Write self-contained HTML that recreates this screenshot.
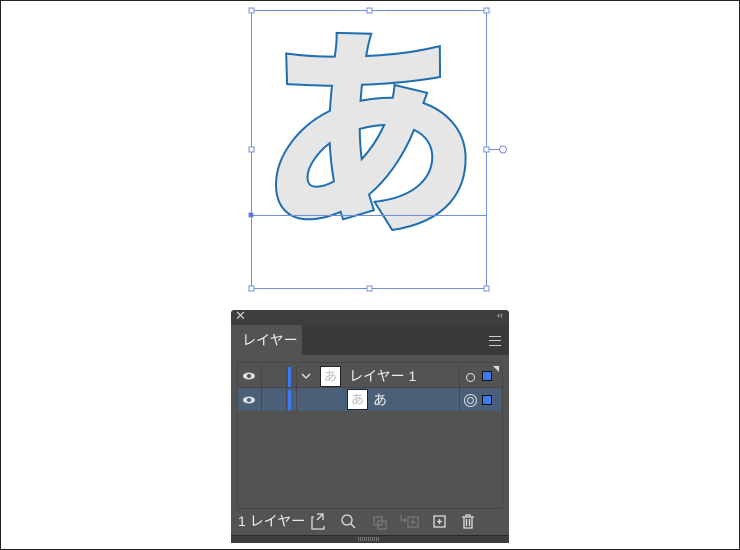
<!DOCTYPE html>
<html><head><meta charset="utf-8"><style>
body{margin:0;width:740px;height:550px;overflow:hidden;background:#fff;font-family:"Liberation Sans","Noto Sans CJK JP",sans-serif;position:relative}
.frame{position:absolute;left:0;top:0;width:738px;height:548px;border:1px solid #222}
.abs{position:absolute}
</style></head><body>
<div class="frame"></div>
<svg class="abs" style="left:0;top:0" width="740" height="300">
<text x="369" y="214" font-family="Noto Sans CJK JP" font-weight="900" font-size="222" text-anchor="middle" fill="#e6e6e6" stroke="#1f6eb0" stroke-width="2">あ</text>
<g stroke="#6f8fdc" stroke-width="1" fill="none">
<rect x="251.5" y="10.5" width="235" height="278"/>
<line x1="251" y1="215.5" x2="487" y2="215.5"/>
<line x1="487" y1="149.5" x2="500" y2="149.5"/>
<circle cx="503" cy="149.5" r="3.5" fill="#fff"/>
<g fill="#fff">
<rect x="249" y="8" width="5" height="5"/><rect x="367" y="8" width="5" height="5"/><rect x="484" y="8" width="5" height="5"/>
<rect x="249" y="147" width="5" height="5"/><rect x="484" y="147" width="5" height="5"/>
<rect x="249" y="286" width="5" height="5"/><rect x="367" y="286" width="5" height="5"/><rect x="484" y="286" width="5" height="5"/>
</g>
<rect x="249" y="213" width="4" height="4" fill="#4a6fd8"/>
</g>
</svg>
<div class="abs" style="left:231px;top:310px;width:278px;height:233px;background:#535353;border-radius:3px 3px 0 0;overflow:hidden">
 <div class="abs" style="left:0;top:0;width:278px;height:15px;background:#3e3e3e;color:#ccc;font-size:13px">
  <span class="abs" style="left:4px;top:-2px">✕</span><span class="abs" style="right:6px;top:0;font-size:9px">‹‹</span></div>
 <div class="abs" style="left:0;top:15px;width:278px;height:30px;background:#3a3a3a"></div>
 <div class="abs" style="left:0;top:15px;width:71px;height:30px;background:#535353;color:#eee;font-size:14px;line-height:30px;text-indent:11px">レイヤー</div>
 <div class="abs" style="right:8px;top:26px;width:12px;height:8px;border-top:1px solid #ccc;border-bottom:1px solid #ccc"><div style="margin-top:3px;border-top:1px solid #ccc"></div></div>
 <div class="abs" style="left:6px;top:52px;width:264px;height:145px;border:1px solid #474747;background:#535353"></div>
 <div class="abs" style="left:7px;top:55px;width:263px;height:22px;background:#535353;border-bottom:1px solid #474747"></div>
 <div class="abs" style="left:7px;top:78px;width:263px;height:23px;background:#4b5f78"></div>
 <div class="abs" style="left:30px;top:55px;width:1px;height:46px;background:#474747"></div>
 <div class="abs" style="left:55px;top:55px;width:1px;height:46px;background:#474747"></div>
 <div class="abs" style="left:65px;top:55px;width:1px;height:46px;background:#474747"></div>
 <div class="abs" style="left:228px;top:55px;width:1px;height:46px;background:#474747"></div>
 <div class="abs" style="left:57px;top:57px;width:3px;height:20px;background:#3c78f0"></div>
 <div class="abs" style="left:57px;top:80px;width:3px;height:20px;background:#3c78f0"></div>
 <svg class="abs" style="left:10px;top:60px" width="16" height="40"><g fill="#ddd"><ellipse cx="8" cy="6" rx="6" ry="3.5"/><ellipse cx="8" cy="30" rx="6" ry="3.5"/></g><g fill="#535353"><circle cx="8" cy="6" r="2"/></g><circle cx="8" cy="30" r="2" fill="#4b5f78"/></svg>
 <svg class="abs" style="left:70px;top:62px" width="10" height="8"><path d="M1 2l4 4 4-4" stroke="#ddd" stroke-width="1.5" fill="none"/></svg>
 <div class="abs" style="left:89px;top:56px;width:19px;height:19px;background:#fff;border:1px solid #222;color:#bbb;font-size:13px;line-height:19px;text-align:center">あ</div>
 <div class="abs" style="left:118px;top:56px;color:#eee;font-size:14px">レイヤー 1</div>
 <div class="abs" style="left:116px;top:79px;width:19px;height:19px;background:#fff;border:1px solid #222;color:#bbb;font-size:13px;line-height:19px;text-align:center">あ</div>
 <div class="abs" style="left:142px;top:80px;color:#eee;font-size:14px">あ</div>
 <div class="abs" style="left:235px;top:63px;width:7px;height:7px;border:1px solid #ddd;border-radius:50%"></div>
 <div class="abs" style="left:233px;top:84px;width:11px;height:11px;border:1px solid #ddd;border-radius:50%"><div style="margin:2px;width:5px;height:5px;border:1px solid #ddd;border-radius:50%"></div></div>
 <div class="abs" style="left:251px;top:61px;width:8px;height:8px;background:#3c78f0;border:1px solid #111"></div>
 <div class="abs" style="left:251px;top:85px;width:8px;height:8px;background:#3c78f0;border:1px solid #111"></div>
 <div class="abs" style="left:262px;top:56px;width:0;height:0;border-left:6px solid transparent;border-top:6px solid #ddd"></div>
 <div class="abs" style="left:7px;top:201px;color:#eee;font-size:14px">1 レイヤー</div>
 <svg class="abs" style="left:80px;top:202px" width="190" height="20" fill="none" stroke="#ddd" stroke-width="1.3">
  <path d="M3 5H1v12h12v-3M6 2h6v6M12 2L6 8"/>
  <circle cx="36" cy="8" r="5"/><path d="M40 12l4 4"/>
  <g stroke="#777"><rect x="63" y="5" width="8" height="8"/><rect x="67" y="9" width="8" height="8"/></g>
  <g stroke="#777"><path d="M90 3v5h5M93 6l2 2-2 2"/><rect x="97" y="5" width="10" height="10"/><path d="M102 7v6M99 10h6"/></g>
  <rect x="123" y="4" width="11" height="11"/><path d="M128.5 7v5M126 9.5h5"/>
  <path d="M151 5h12M155 5V3h4v2M153 5v11h8V5M155.5 7v7M158.5 7v7"/>
 </svg>
 <div class="abs" style="left:0;top:225px;width:278px;height:8px;background:#3e3e3e;border-top:1px solid #2a2a2a"></div>
 <div class="abs" style="left:127px;top:227px;width:22px;height:4px;background:repeating-linear-gradient(90deg,#777 0 1px,transparent 1px 2px)"></div>
</div>
</body></html>
